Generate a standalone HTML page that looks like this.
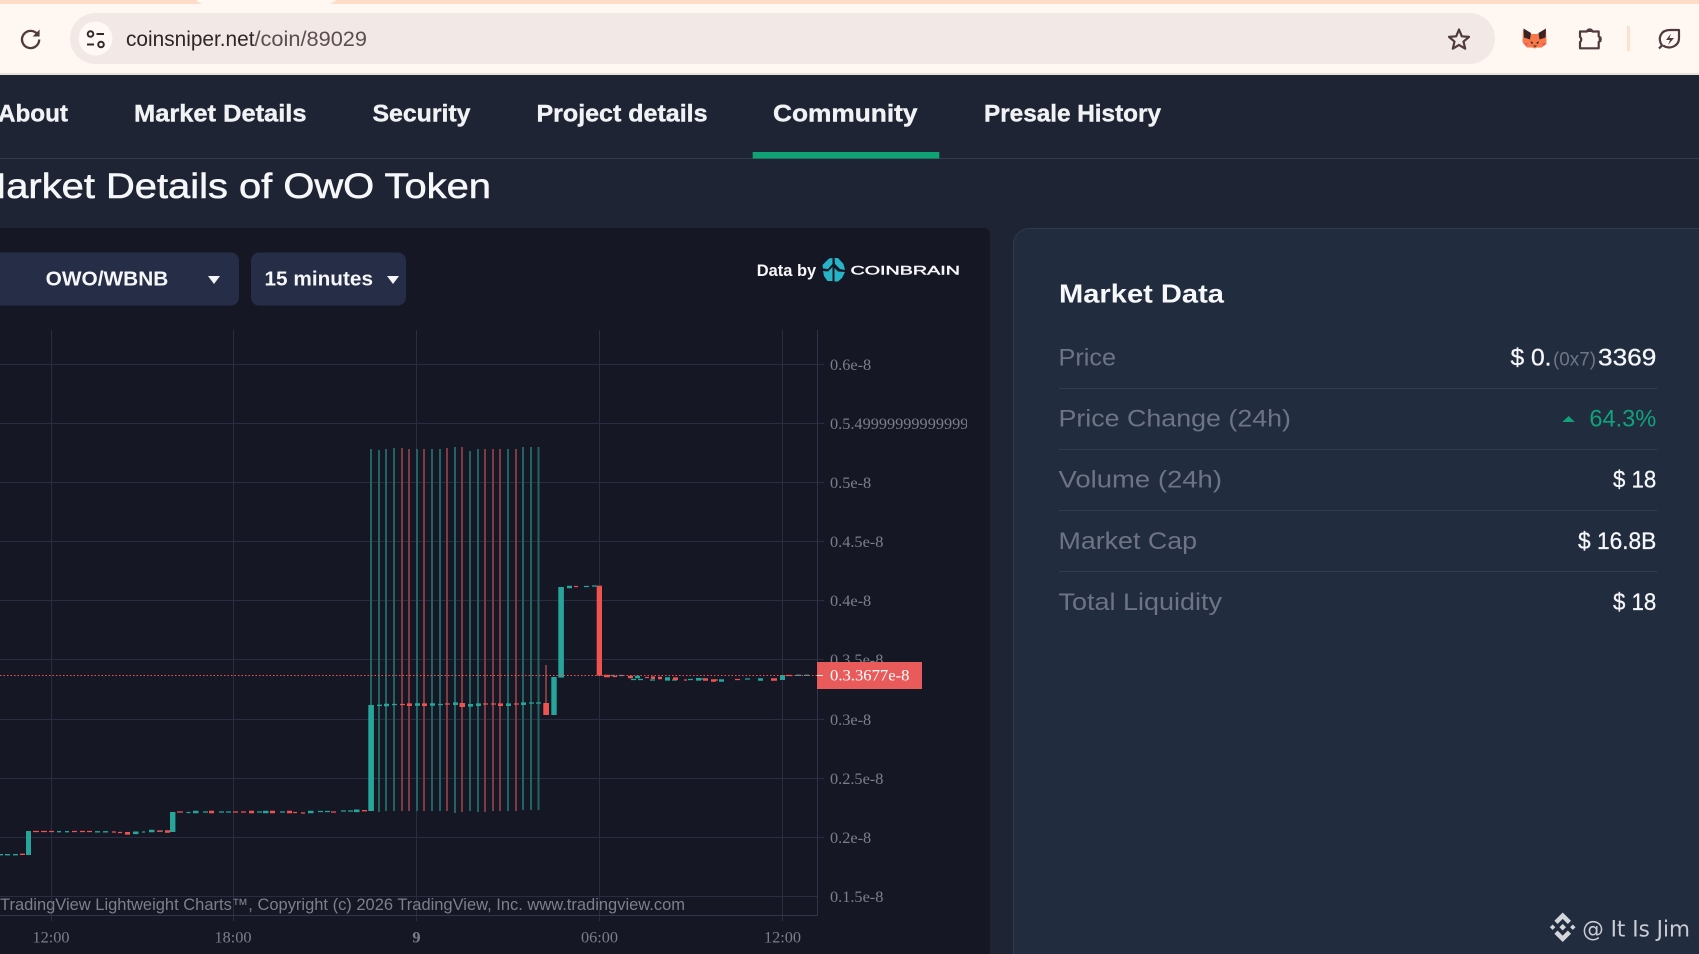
<!DOCTYPE html>
<html lang="en">
<head>
<meta charset="utf-8">
<title>Market Details of OwO Token</title>
<style>
html,body{margin:0;padding:0;width:1699px;height:954px;overflow:hidden;background:#1e2434}
svg{display:block;position:absolute;left:0;top:0}
text{font-family:"Liberation Sans",sans-serif}
.nav{font-weight:bold;font-size:24px;fill:#f1f2f4;stroke:#f1f2f4;stroke-width:.4}
.ax{font-family:"Liberation Serif",serif;font-size:16.3px;fill:#7b7e8c}
.lb{font-size:24px;fill:#6d7484}
.val{font-size:24px;fill:#f5f6f8;stroke:#f5f6f8;stroke-width:.3}
</style>
</head>
<body>
<svg width="1699" height="954" viewBox="0 0 1699 954" xmlns="http://www.w3.org/2000/svg">
<defs><clipPath id="ax"><rect x="820" y="320" width="147" height="600"/></clipPath></defs>

<!-- browser chrome -->
<rect width="1699" height="75" fill="#fff8f2"/>
<rect width="1699" height="4" fill="#ffdcc8"/>
<path d="M196 0Q200 4 204 4H328Q332 4 336 0Z" fill="#fff8f2"/>
<rect y="73" width="1699" height="2" fill="#e8e2dd"/>
<rect x="70" y="13" width="1425" height="51" rx="25.5" fill="#f2e8e5"/>
<!-- reload -->
<path d="M37.4 34.2A8.6 8.6 0 1 0 39.2 39.5" fill="none" stroke="#4f3a3e" stroke-width="2.3"/>
<path d="M39.6 29.5V36.5H32.6Z" fill="#4f3a3e"/>
<!-- site info -->
<circle cx="95.5" cy="38.5" r="17" fill="#fff8f4"/>
<circle cx="90.5" cy="34" r="2.8" fill="none" stroke="#33282a" stroke-width="2"/>
<path d="M96.5 34H104M87 44.5H94" stroke="#33282a" stroke-width="2" fill="none"/>
<circle cx="101" cy="44.5" r="2.8" fill="none" stroke="#33282a" stroke-width="2"/>
<text x="126" y="46" font-size="21" fill="#2f2527" textLength="128.5" lengthAdjust="spacingAndGlyphs">coinsniper.net</text>
<text x="254.5" y="46" font-size="21" fill="#5c4f51" textLength="112.5" lengthAdjust="spacingAndGlyphs">/coin/89029</text>
<!-- star -->
<path d="M1459 29.5L1461.8 36.3L1469 36.9L1463.5 41.6L1465.2 48.7L1459 44.9L1452.8 48.7L1454.5 41.6L1449 36.9L1456.2 36.3Z" fill="none" stroke="#4f3a3e" stroke-width="2.2" stroke-linejoin="round"/>
<!-- fox -->
<path d="M1523 30L1531 34H1538L1546 30L1546.5 42L1542 47.5L1537 47.5L1535 48.5L1532 47.5L1527 47.5L1522.5 42Z" fill="#f7794a"/>
<path d="M1523.5 28.5L1531 33L1530 39.5L1524 37.5ZM1546 28.5L1538.5 33L1539.5 39.5L1545.5 37.5Z" fill="#3a2226"/>
<path d="M1530.5 41L1533.5 43L1531.5 44ZM1539 41L1536 43L1538 44ZM1533 45.5H1537L1535 47Z" fill="#3a2226"/>
<path d="M1523 43H1528L1526.5 46.5ZM1547 43H1542L1543.5 46.5Z" fill="#ef5a5a"/>
<!-- puzzle -->
<path d="M1580 31.5H1587A2.8 2.8 0 0 1 1592.4 31.5H1598.7V36.5A2.9 2.9 0 0 1 1598.7 42V48.3H1580V42.2A3.6 3.6 0 0 0 1580 36.8Z" fill="none" stroke="#4f3a3e" stroke-width="2.2" stroke-linejoin="round"/>
<path d="M1587 29.5h5.4v2.5h-5.4ZM1598.7 36.5h2.6v5.5h-2.6Z" fill="#4f3a3e"/>
<rect x="1627" y="26" width="3" height="25" fill="#fde0cf"/>
<!-- leaf -->
<path d="M1659 48.5L1662 45.5C1657 38 1661 30 1670 30H1679V38C1679 46 1670 50 1663 45.5" fill="none" stroke="#4f3a3e" stroke-width="2.2" stroke-linejoin="round"/>
<path d="M1671 33.5L1666 40H1670L1668 45L1674 38H1669.5Z" fill="#4f3a3e"/>

<!-- page -->
<rect y="75" width="1699" height="879" fill="#1e2434"/>
<rect y="158" width="1699" height="1" fill="#343a4e"/>
<text class="nav" x="-2" y="121.5" textLength="70" lengthAdjust="spacingAndGlyphs">About</text>
<text class="nav" x="134" y="121.5" textLength="172.5" lengthAdjust="spacingAndGlyphs">Market Details</text>
<text class="nav" x="372.5" y="121.5" textLength="98" lengthAdjust="spacingAndGlyphs">Security</text>
<text class="nav" x="536.5" y="121.5" textLength="171" lengthAdjust="spacingAndGlyphs">Project details</text>
<text class="nav" x="773" y="121.5" textLength="144.5" lengthAdjust="spacingAndGlyphs">Community</text>
<text class="nav" x="984" y="121.5" textLength="177" lengthAdjust="spacingAndGlyphs">Presale History</text>
<rect x="752.7" y="152" width="186.6" height="6.5" fill="#10a274"/>
<text x="-27" y="198" font-size="35" fill="#f6f7f8" stroke="#f6f7f8" stroke-width=".55" textLength="518" lengthAdjust="spacingAndGlyphs">Market Details of OwO Token</text>

<!-- chart panel -->
<path d="M0 228H983Q990 228 990 235V954H0Z" fill="#161725"/>
<rect x="-10" y="252.5" width="249" height="53" rx="8" fill="#252d47"/>
<rect x="251" y="252.5" width="155" height="53" rx="8" fill="#252d47"/>
<text x="45.7" y="285.3" font-size="20" font-weight="bold" fill="#f7f7f9" textLength="122.6" lengthAdjust="spacingAndGlyphs">OWO/WBNB</text>
<text x="264.5" y="285.3" font-size="20" font-weight="bold" fill="#f7f7f9" textLength="108.5" lengthAdjust="spacingAndGlyphs">15 minutes</text>
<path d="M208 276H220L214 284ZM387 276H399L393 284Z" fill="#f5f5f7"/>
<text x="756.7" y="276" font-size="16.5" font-weight="bold" fill="#f7f7f9" textLength="59.5" lengthAdjust="spacingAndGlyphs">Data by</text>
<!-- coinbrain logo -->
<path d="M829 258.5L832.5 258V264L828 269L823 268.5L822.5 265ZM834.5 258H838L843.5 264L845 270L840 269L835 264ZM823 271L828 271.5L832.5 267V281L827.5 281L824 276ZM834.5 268L838 271.5L845 272L842 278L838 281.5H834.5Z" fill="#26b4c6"/>
<text x="850.5" y="274.5" font-size="12" fill="#f7f7f9" stroke="#f7f7f9" stroke-width=".4" textLength="109.5" lengthAdjust="spacingAndGlyphs">COINBRAIN</text>

<!-- grid -->
<g stroke="#2a2d40" stroke-width="1" fill="none">
<path d="M0 364.5H824M0 423.5H824M0 482.5H824M0 541.5H824M0 600.5H824M0 659.5H824M0 719.5H824M0 778.5H824M0 837.5H824M0 896.5H817"/>
<path d="M51.5 330V921M233.5 330V921M416.5 330V921M599.5 330V921M782.5 330V921"/>
<path d="M817.5 330V915.5M0 915.5H817.5" stroke="#31344a"/>
</g>

<!-- wicks -->
<g stroke-width="2" fill="none">
<path stroke="#246363" d="M371 449V705M379 450V812M386 449V811M394 448V811M417 449V811M432 449V811M440 449V811M455 447V813M470 451V811M478 449V812M508 449V811M523 447V810M531 447V810M538.5 447V810"/>
<path stroke="#7b3c43" d="M402 448V811M409 449V811M424 449V811M447 448V811M462 447V812M485 449V812M493 449V811M500 449V811M516 449V811M546 665V703"/>
</g>

<!-- small bodies: teal -->
<path fill="none" stroke="#26a69a" stroke-width="1.3" d="M0 854.7h3M5 854.7h5M13 854.7h5M57 831.7h4M65 831.7h4M95 831.8h5M103 831.8h5M142 832h3M158 831h5M186.5 812.5h4M203 812h5M219 812h5M226 812h5M257 812h5M280 812h5M318 811.5h5M325 811.5h5M341 811h5M348 811h5M584 586.5h5M592 586h5M377 705.3h5M392 704.5h5M438 704.5h5M529 703h5M536 703h5M631 679.5h5M638 679.5h5M650 680h5M665 680h5M672 680h5M688 679.5h5M700 679h5M745 679h5M796 675.3h5M804 675.3h5"/>
<path fill="none" stroke="#26a69a" stroke-width="2.6" d="M133 832.8h5.5M149 831h5.5M193 812h5.5M263 812h5.5M308 812h5.5M354 810.8h5.5M384 705h5M415 704.5h5M430 704.5h5M453 703.7h5M468 705.3h5M476 704.7h5M506 704.7h5M521 703.7h5M567 587h5M635 677h5M665 678.5h5M696 679.3h5M719 680.5h5M758 679.5h5"/>
<!-- small bodies: red -->
<path fill="none" stroke="#ef5350" stroke-width="1.3" d="M20 854.3h5M33 831.5h6M41 831.5h6M49 831.5h5M72 831.5h5M80 831.5h5M87 831.5h5M112 832h4M118 832.5h4M157 831.2h5M177 812h6M233 812h5M241 812h5M293 812.5h4M301 813h4M331 812h5M362 810.7h5M400 704.5h5M445 704h5M483 704h5M491 704h5M514 704h5M574 586.5h4M613 676.5h4M645 677.5h4M684 680h3M714 680h4M735 679.5h5M786 675.5h6"/>
<path fill="none" stroke="#ef5350" stroke-width="2.6" d="M125 833.3h5M165 831.5h5M209 812h5M249 812h5M270 812h5M287 812h5M407 704.7h5M422 704.7h5M498 704.7h5M604 676h6M628 677h5M651 677.7h4M658 678h4M673 678.7h5M703 679.5h5M711 680.5h5M771 679.5h6"/>
<path fill="none" stroke="#7f8f96" stroke-width="1.3" d="M611 675.5h4M619 675.5h4M626 676h0"/>
<!-- big bodies -->
<g fill="#26a69a">
<rect x="26" y="831" width="5" height="24"/>
<rect x="170" y="812" width="5.4" height="20"/>
<rect x="368.3" y="705" width="5.6" height="106"/>
<rect x="551.3" y="677" width="5.4" height="38"/>
<rect x="558.3" y="587" width="5.6" height="90.6"/>
<rect x="780" y="675" width="5" height="5"/>
</g>
<g fill="#ef5350">
<rect x="459.5" y="703" width="5.5" height="4"/>
<rect x="543.3" y="703" width="5.7" height="12"/>
<rect x="596.7" y="585.7" width="5.3" height="90"/>
</g>

<!-- last price line -->
<path d="M0 675.5H817" stroke="#ef5350" stroke-width="1" stroke-dasharray="1.5 2" fill="none"/>

<!-- axis labels -->
<g clip-path="url(#ax)">
<text class="ax" x="830" y="370">0.6e-8</text>
<text class="ax" x="830" y="429">0.5.49999999999999</text>
<text class="ax" x="830" y="488">0.5e-8</text>
<text class="ax" x="830" y="547">0.4.5e-8</text>
<text class="ax" x="830" y="606">0.4e-8</text>
<text class="ax" x="830" y="665">0.3.5e-8</text>
<text class="ax" x="830" y="725">0.3e-8</text>
<text class="ax" x="830" y="784">0.2.5e-8</text>
<text class="ax" x="830" y="843">0.2e-8</text>
<text class="ax" x="830" y="902">0.1.5e-8</text>
</g>
<rect x="817" y="662" width="105" height="27" fill="#e95b5a"/>
<rect x="817" y="675" width="6" height="1" fill="#ffe9e9"/>
<text x="830" y="680.5" font-size="16" fill="#fff" style="font-family:'Liberation Serif',serif" textLength="79.5" lengthAdjust="spacingAndGlyphs">0.3.3677e-8</text>
<text class="ax" x="51" y="942.3" text-anchor="middle">12:00</text>
<text class="ax" x="233" y="942.3" text-anchor="middle">18:00</text>
<text class="ax" x="416.5" y="942.3" text-anchor="middle" font-weight="bold">9</text>
<text class="ax" x="599.5" y="942.3" text-anchor="middle">06:00</text>
<text class="ax" x="782.5" y="942.3" text-anchor="middle">12:00</text>
<text x="0" y="910" font-size="16.5" fill="#7d7f8c" textLength="685" lengthAdjust="spacingAndGlyphs">TradingView Lightweight Charts™, Copyright (c) 2026 TradingView, Inc. www.tradingview.com</text>

<!-- market data panel -->
<rect x="1013.5" y="228.5" width="720" height="760" rx="16" fill="#212c3f" stroke="#2e394d"/>
<text x="1059" y="302.7" font-size="26" font-weight="bold" fill="#f7f8f9" textLength="165" lengthAdjust="spacingAndGlyphs">Market Data</text>
<g fill="#323d50">
<rect x="1059" y="388" width="598" height="1"/>
<rect x="1059" y="449" width="598" height="1"/>
<rect x="1059" y="510" width="598" height="1"/>
<rect x="1059" y="571" width="598" height="1"/>
</g>
<text class="lb" x="1058.5" y="365.7" textLength="57.5" lengthAdjust="spacingAndGlyphs">Price</text>
<text class="lb" x="1058.5" y="426.7" textLength="232.5" lengthAdjust="spacingAndGlyphs">Price Change (24h)</text>
<text class="lb" x="1058.5" y="487.7" textLength="163.5" lengthAdjust="spacingAndGlyphs">Volume (24h)</text>
<text class="lb" x="1058.5" y="549" textLength="138.5" lengthAdjust="spacingAndGlyphs">Market Cap</text>
<text class="lb" x="1058.5" y="610" textLength="163.5" lengthAdjust="spacingAndGlyphs">Total Liquidity</text>
<text class="val" x="1510.5" y="365.7" textLength="41" lengthAdjust="spacingAndGlyphs">$ 0.</text>
<text x="1553" y="365.7" font-size="19" fill="#6f7684" textLength="43" lengthAdjust="spacingAndGlyphs">(0x7)</text>
<text class="val" x="1598" y="365.7" textLength="58.3" lengthAdjust="spacingAndGlyphs">3369</text>
<path d="M1568.6 416L1574.8 422H1562.4Z" fill="#10a37a"/>
<text x="1589.4" y="426.7" font-size="24" fill="#10a37a" textLength="66.9" lengthAdjust="spacingAndGlyphs">64.3%</text>
<text class="val" x="1613" y="487.7" textLength="43.3" lengthAdjust="spacingAndGlyphs">$ 18</text>
<text class="val" x="1578" y="549" textLength="78.3" lengthAdjust="spacingAndGlyphs">$ 16.8B</text>
<text class="val" x="1613" y="610" textLength="43.3" lengthAdjust="spacingAndGlyphs">$ 18</text>

<!-- watermark -->
<g fill="#d4d6db">
<path d="M1562.7 912.5L1571 920.8L1567.8 924L1562.7 918.9L1557.6 924L1554.4 920.8Z"/>
<path d="M1562.7 942L1571 933.7L1567.8 930.5L1562.7 935.6L1557.6 930.5L1554.4 933.7Z"/>
<path d="M1562.7 923.9L1566 927.2L1562.7 930.5L1559.4 927.2Z"/>
<path d="M1552.6 924.5L1555.3 927.2L1552.6 929.9L1549.9 927.2ZM1572.8 924.5L1575.5 927.2L1572.8 929.9L1570.1 927.2Z"/>
</g>
<text x="1582.2" y="936.7" font-size="22" fill="#c9ccd2" style="font-family:'DejaVu Sans',sans-serif" textLength="107.8" lengthAdjust="spacingAndGlyphs">@ It Is Jim</text>
</svg>
</body>
</html>
